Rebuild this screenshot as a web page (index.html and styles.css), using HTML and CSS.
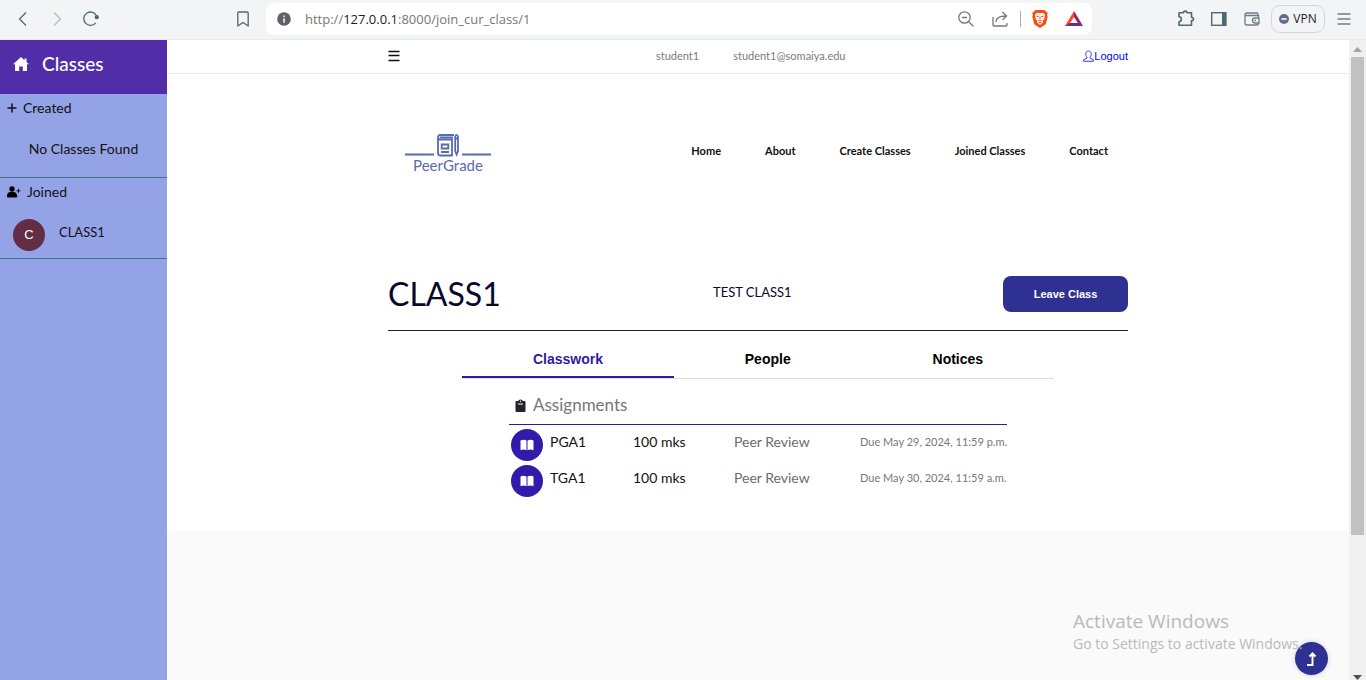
FILE: index.html
```html
<!DOCTYPE html>
<html lang="en">
<head>
<meta charset="utf-8">
<meta name="viewport" content="width=device-width, initial-scale=1">
<title>PeerGrade</title>
<link rel="stylesheet" href="styles.css">
</head>
<body>
<header class="browser">
  <div class="browser-nav">
    <button class="tool" aria-label="Back"><svg width="20" height="20" viewBox="0 0 20 20" fill="none" stroke="#526871" stroke-width="1.3"><path d="M13 3.500 6.500 10l6.500 6.500"/></svg></button>
    <button class="tool" aria-label="Forward"><svg width="20" height="20" viewBox="0 0 20 20" fill="none" stroke="#b4bec3" stroke-width="1.300"><path d="M7 3.500 13.500 10 7 16.500"/></svg></button>
    <button class="tool" aria-label="Reload"><svg width="20" height="20" viewBox="0 0 20 20" fill="none" stroke="#526871" stroke-width="1.300"><path d="M14.800 13.800A6.700 6.700 0 1 1 15.800 7.500"/><circle cx="15.800" cy="8.200" r="1.500" fill="#526871"/></svg></button>
  </div>
  <button class="tool" aria-label="Bookmark"><svg width="20" height="20" viewBox="0 0 20 20" fill="none" stroke="#526871" stroke-width="1.300"><path d="M4.800 17V4q0-1 1-1h8.400q1 0 1 1v13L10 13.500z" stroke-linejoin="round"/></svg></button>
  <div class="address">
    <svg width="14" height="14" viewBox="0 0 14 14"><circle cx="7" cy="7" r="6.800" fill="#5f6368"/><path d="M6.200 6.200h1.700v4.500H6.200zM6.200 3.400h1.700V5H6.200z" fill="#e8e8e8"/></svg>
    <span class="url">http://<span class="host">127.0.0.1</span>:8000/join_cur_class/1</span>
    <button class="tool" aria-label="Zoom out"><svg width="20" height="20" viewBox="0 0 20 20" fill="none" stroke="#777" stroke-width="1.300"><circle cx="8.500" cy="8.500" r="5.700"/><path d="m12.700 12.700 4.800 4.800M6 8.500h5"/></svg></button>
    <button class="tool" aria-label="Share"><svg width="20" height="20" viewBox="0 0 20 20" fill="none" stroke="#777" stroke-width="1.300"><path d="M3 8v8q0 1 1 1h12q1 0 1-1v-2M6 13c0-4 3-6 10-6M12.500 3 16.500 7l-4 4"/></svg></button>
    <span class="separator"></span>
    <button class="tool" aria-label="Brave Shields"><svg width="20" height="20" viewBox="0 0 20 20"><path d="M5.500 1h9L16.300 3l1.300.5-.3 3 .4 1.200-2 7.500L10 19l-5.700-3.800-2-7.500.4-1.200-.3-3L3.700 3z" fill="#fb4b0b"/><path d="m7 3.700 3 .6 3-.6 2 2-.7 4.600-1.800 1.500.5 1.700-3 2.500-3-2.500.5-1.700-1.800-1.500L5 5.700z" fill="#fff"/><path d="m6.200 7 2.600.7M13.800 7l-2.600.7M10 7.500v3M8.300 11l1.700 1 1.700-1M8.500 14l1.500-.8 1.500.8" fill="none" stroke="#fb4b0b"/></svg></button>
    <button class="tool" aria-label="Rewards"><svg width="20" height="20" viewBox="0 0 20 20"><path d="M10 2 1 17l4.800-2.500L10 8z" fill="#ff4724"/><path d="m10 2 9 15-4.800-2.500L10 8z" fill="#9e1f63"/><path d="M1 17h18l-4.800-3H5.800z" fill="#662d91"/></svg></button>
  </div>
  <div class="browser-actions">
    <button class="tool" aria-label="Extensions"><svg width="20" height="20" viewBox="0 0 20 20" fill="none" stroke="#526871" stroke-width="1.600"><path d="M3 3.800h4.500c0-2.300 3.500-2.300 3.500 0h4.500v4.400c2.600 0 2.600 3.400 0 3.400V16.200H3v-3.500c3 0 3-5 0-5z" stroke-linejoin="round"/></svg></button>
    <button class="tool" aria-label="Side panel"><svg width="20" height="20" viewBox="0 0 20 20"><rect x="2.700" y="3.700" width="14" height="12.600" fill="none" stroke="#526871" stroke-width="1.400"/><path d="M13 3h4.400v14H13z" fill="#526871"/></svg></button>
    <button class="tool" aria-label="Wallet"><svg width="20" height="20" viewBox="0 0 20 20" fill="none" stroke="#6c7e87" stroke-width="1.300"><path d="M16 6.500V5q0-1-1-1H5Q3 4 3 6v8q0 2 2 2h10q1.500 0 1.500-1.500M3 6.500h13.500v2.500M17 9h-4a2.300 2.300 0 0 0 0 5h4zM12.500 11.500h1.500"/></svg></button>
    <button class="vpn"><svg width="10" height="10" viewBox="0 0 10 10"><circle cx="5" cy="5" r="5" fill="#656b8c"/><path d="M2.500 4.200h5v1.600h-5z" fill="#fff"/></svg>VPN</button>
    <button class="tool" aria-label="Menu"><svg width="20" height="20" viewBox="0 0 20 20" stroke="#6c7e87" stroke-width="1.300"><path d="M3.500 5h13M3.500 10h13M3.500 15h13"/></svg></button>
  </div>
</header>
<div class="viewport">
  <aside class="sidebar">
    <h2 class="sidebar-title"><svg width="18" height="16" viewBox="0 0 18 16"><path d="M9 1 1 8.200h2V15h4.200v-4.500h3.600V15H15V8.200h2L14.500 6V2.500h-2v1.700z" fill="#fff"/></svg>Classes</h2>
    <section class="group created">
      <h3 class="group-title"><svg width="10" height="10" viewBox="0 0 10 10"><path d="M5 .5v9M.5 5h9" stroke="#111" stroke-width="1.500"/></svg>Created</h3>
      <p class="empty">No Classes Found</p>
    </section>
    <section class="group joined">
      <h3 class="group-title"><svg width="14" height="12" viewBox="0 0 14 12"><circle cx="5" cy="3" r="2.700"/><path d="M.2 11c0-3 1-4.500 3-4.500h3.600c2 0 3 1.500 3 4.500zM11.500 2.800v4M9.500 4.800h4" stroke="#000" stroke-width=".9"/></svg>Joined</h3>
      <a class="class-link" href="#"><span class="avatar">C</span><span class="class-name">CLASS1</span></a>
    </section>
  </aside>
  <div class="page">
    <div class="topbar">
      <div class="container topbar-row">
        <button class="menu-button" aria-label="Toggle sidebar"><svg width="12" height="12" viewBox="0 0 12 12"><path d="M.5 1.500h11M.5 5.500h11M.5 10.500h11" stroke="#111" stroke-width="1.500"/></svg></button>
        <div class="user"><span>student1</span><span>student1@somaiya.edu</span></div>
        <a class="logout" href="#"><svg width="11" height="12" viewBox="0 0 11 12" fill="none" stroke="#22f" stroke-width=".9"><path d="M4 7.300C1.900 5 2.400 1 5.500 1S9 5 7 7.300v.8l3.300 1.600v1.600H.7V9.700L4 8.100z"/></svg>Logout</a>
      </div>
    </div>
    <header class="container site-header">
      <a class="logo" href="#" aria-label="PeerGrade home">
        <svg width="86" height="42" viewBox="0 0 86 42">
          <g fill="none" stroke="#596bad" stroke-width="1.800"><path d="M0 21.500h29M57 21.500h29"/><path d="M49 2H35q-2 0-2 3v15q0 2.500 2.500 2.500H47V6.500H35q-1.500-.2-1.700-1.500M35 4.300h13M36.700 11.500h6.600v4h-6.600zM36 19h8"/><path d="M50.200 18V3.500q1.400-3.400 2.800 0V18l-1.400 3.500zM50.500 5.500h2.500"/></g>
          <text class="logo-text" x="43" y="38" text-anchor="middle">PeerGrade</text>
        </svg>
      </a>
      <nav class="site-nav"><a href="#">Home</a><a href="#">About</a><a href="#">Create Classes</a><a href="#">Joined Classes</a><a href="#">Contact</a></nav>
    </header>
    <main class="container">
      <div class="class-head">
        <h1>CLASS1</h1>
        <p class="description">TEST CLASS1</p>
        <button class="leave">Leave Class</button>
      </div>
      <div class="tabs" role="tablist">
        <button class="tab active" role="tab" aria-selected="true">Classwork</button>
        <button class="tab" role="tab" aria-selected="false">People</button>
        <button class="tab" role="tab" aria-selected="false">Notices</button>
      </div>
      <section class="work">
        <h2><svg width="11" height="13" viewBox="0 0 11 13"><path d="M1.500 2h2V1.300Q5.500-.5 7.500 1.300V2h2q1 0 1 1v9q0 1-1 1h-8q-1 0-1-1V3q0-1 1-1z" fill="#212529"/><path d="M3 5h5" stroke="#fff"/><circle cx="5.500" cy="2.200" r=".7" fill="#fff"/></svg>Assignments</h2>
        <table>
          <colgroup><col class="col-icon"><col class="col-name"><col class="col-marks"><col class="col-type"><col></colgroup>
          <tbody>
            <tr><td><span class="book"><svg width="14" height="12" viewBox="0 0 14 12" fill="#fff"><path d="M.5 1.500Q3.500.2 6.500 1.500v9.700Q3.500 10 .5 11.200zM7.500 1.500q3-1.300 6 0v9.700q-3-1.200-6 0z"/></svg></span></td><td>PGA1</td><td>100 mks</td><td class="type">Peer Review</td><td class="due">Due May 29, 2024, 11:59 p.m.</td></tr>
            <tr><td><span class="book"><svg width="14" height="12" viewBox="0 0 14 12" fill="#fff"><path d="M.5 1.500Q3.500.2 6.500 1.500v9.700Q3.500 10 .5 11.200zM7.500 1.500q3-1.300 6 0v9.700q-3-1.200-6 0z"/></svg></span></td><td>TGA1</td><td>100 mks</td><td class="type">Peer Review</td><td class="due">Due May 30, 2024, 11:59 a.m.</td></tr>
          </tbody>
        </table>
      </section>
    </main>
    <footer class="site-footer"></footer>
  </div>
  <div class="scrollbar">
    <svg width="9" height="5" viewBox="0 0 9 5"><path d="M0 5 4.500 0 9 5z" fill="#a3a3a3"/></svg>
    <div class="thumb"></div>
    <svg width="9" height="5" viewBox="0 0 9 5"><path d="m0 0 4.500 5L9 0z" fill="#505050"/></svg>
  </div>
  <button class="to-top" aria-label="Back to top"><svg width="12" height="16" viewBox="0 0 12 16" fill="none" stroke="#fff" stroke-width="2"><path d="M1 14h5.500V3M3.500 5.500 6.500 2.500l3 3"/></svg></button>
  <div class="watermark"><p class="watermark-title">Activate Windows</p><p class="watermark-text">Go to Settings to activate Windows.</p></div>
</div>
</body>
</html>
```
FILE: styles.css
```css
* { box-sizing: border-box; }
body {
  display: flex;
  flex-direction: column;
  height: 100vh;
  margin: 0;
  overflow: hidden;
  background: #fff;
  color: #111;
  font: 14px/20px Lato, sans-serif;
}
h1, h2, h3, p { margin: 0; font-weight: 400; }
button { padding: 0; border: 0; background: none; color: inherit; font: inherit; cursor: pointer; }
a { color: inherit; text-decoration: none; }
svg { display: block; flex: none; }

.browser {
  display: flex;
  align-items: center;
  flex: none;
  height: 40px;
  padding: 0 12px 2px 13px;
  border-bottom: 1px solid #e9eaec;
  background: #f3f4f6;
}
.browser-nav { display: flex; gap: 14px; margin-right: 132px; }
.browser > .tool { margin-right: 13px; }
.address {
  display: flex;
  align-items: center;
  flex: 1;
  height: 32px;
  padding: 0 8px 0 11px;
  border-radius: 8px;
  background: #fff;
}
.address .tool { margin-left: 14px; }
.url { flex: 1; margin-left: 14px; color: #777; font: 13px/20px "Open Sans", sans-serif; }
.host { color: #222; }
.separator { width: 1px; height: 16px; margin: 0 -5px 0 10px; background: #aaa; }
.browser-actions { display: flex; align-items: center; gap: 13px; margin-left: 84px; }
.vpn {
  display: flex;
  align-items: center;
  justify-content: center;
  gap: 4px;
  width: 54px;
  height: 28px;
  margin: 0 -4px;
  border: 1px solid #cfd6dc;
  border-radius: 9px;
  color: #222;
  font: 12px/16px "Open Sans", sans-serif;
}

.viewport { position: relative; display: flex; flex: 1; min-height: 0; }
.sidebar { flex: none; width: 167px; background: #94a3e6; }
.sidebar-title {
  display: flex;
  align-items: center;
  gap: 12px;
  height: 54px;
  padding: 0 12px 6px;
  background: #512da8;
  color: #fff;
  font-weight: 500;
  font-size: 19px;
  line-height: 24px;
}
.group { padding-top: 4px; border-bottom: 1px solid #427584; }
.group-title { display: flex; align-items: center; gap: 6px; padding: 0 7px; font-size: 14px; line-height: 20px; }
.empty { padding: 21px 0 18px; text-align: center; }
.class-link { display: flex; gap: 14px; padding: 17px 13px 7px; }
.avatar {
  display: grid;
  place-items: center;
  width: 32px;
  height: 32px;
  border-radius: 50%;
  background: #632d46;
  color: #fff;
  font: 13px/20px "Liberation Sans", sans-serif;
}
.class-name { padding-top: 3px; font-size: 13px; }

.page { display: flex; flex-direction: column; flex: 1; min-width: 0; }
.container { width: 100%; max-width: 740px; margin: 0 auto; }
.topbar { border-bottom: 1px solid #ececec; }
.topbar-row { display: grid; grid-template-columns: 268px 1fr auto; align-items: center; height: 33px; padding-bottom: 1px; }
.menu-button { justify-self: start; }
.user { display: flex; gap: 34px; color: #7b7b7b; font-size: 11px; line-height: 16px; }
.logout { display: flex; align-items: center; color: #00f; font: 11px/16px "Liberation Sans", sans-serif; }
.site-header { display: flex; align-items: center; justify-content: space-between; padding: 59px 20px 97px 17px; }
.logo-text { fill: #596bad; font: 15px Lato, sans-serif; }
.site-nav { display: flex; gap: 44px; padding-bottom: 6px; color: #111; font-size: 11px; font-weight: 700; line-height: 16px; }
.class-head {
  display: grid;
  grid-template-columns: 325px 1fr auto;
  align-items: center;
  padding: 0 0 15px;
  border-bottom: 1px solid #222;
  color: #08082c;
}
.class-head h1 { font-size: 32px; line-height: 43px; }
.description { padding-bottom: 4px; font-size: 13px; }
.leave {
  width: 125px;
  height: 36px;
  border-radius: 8px;
  background: #2e3092;
  color: #fff;
  font: 700 11px/16px "Liberation Sans", sans-serif;
}
.tabs { display: flex; width: 80%; margin: 11px auto 0; border-bottom: 1px solid #dcdddf; }
.tab {
  flex: 1 1 auto;
  height: 36px;
  border-bottom: 2px solid transparent;
  color: #000;
  font: 700 14px/20px "Liberation Sans", sans-serif;
}
.tab.active { border-color: #311b9f; color: #311b9f; }
.work { width: 498px; margin: 0 auto; padding: 14px 0 32px; }
.work h2 {
  display: flex;
  align-items: center;
  gap: 7px;
  padding: 0 6px 7px;
  border-bottom: 1px solid #311b92;
  color: #777;
  font-size: 17px;
  line-height: 24px;
}
table { width: 100%; margin-top: 2px; border-collapse: collapse; table-layout: fixed; }
td { height: 36px; padding: 5px 2px; vertical-align: top; white-space: nowrap; }
td:first-child { padding: 2px; }
.col-icon { width: 39px; }
.col-name { width: 83px; }
.col-marks { width: 101px; }
.col-type { width: 126px; }
.type { color: #6c6c6c; }
.due { color: #777; font-size: 11px; }
.book { display: grid; place-items: center; width: 32px; height: 32px; border-radius: 50%; background: #311baa; }
.site-footer { flex: 1; background: #fafafa; }

.scrollbar {
  display: flex;
  flex-direction: column;
  align-items: center;
  flex: none;
  width: 17px;
  padding-top: 7px;
  background: #f0f0f0;
}
.thumb { width: 13px; height: 75.5%; margin: 5px 0 auto; background: #c1c1c1; }
.to-top {
  position: absolute;
  right: 38px;
  bottom: 5px;
  display: grid;
  place-items: center;
  width: 33px;
  height: 33px;
  border-radius: 50%;
  background: #2e3092;
  box-shadow: 0 0 5px #ccc;
}
.watermark { position: absolute; right: 57px; bottom: 26px; width: 236px; color: #b9b9b9; font-family: "Open Sans", sans-serif; pointer-events: none; }
.watermark-title { font-size: 19px; line-height: 24px; }
.watermark-text { font-size: 14px; line-height: 21px; white-space: nowrap; }
```
